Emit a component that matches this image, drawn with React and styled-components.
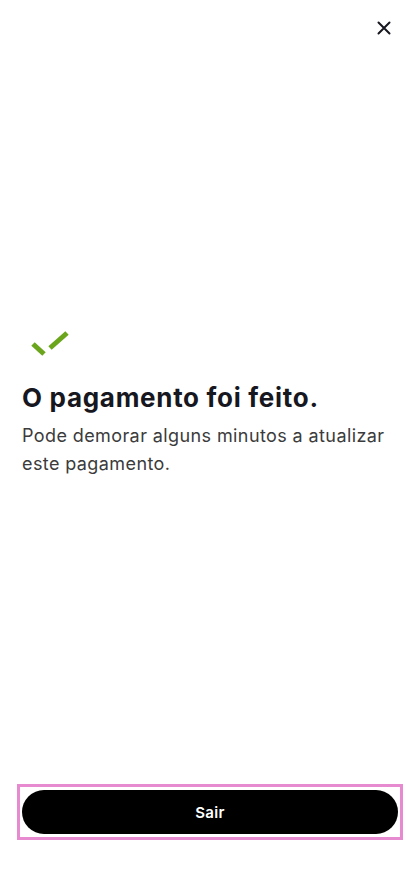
import React from 'react';
import styled, { createGlobalStyle } from 'styled-components';

const GlobalStyle = createGlobalStyle`
    html, body, #root {
        margin: 0;
        padding: 0;
        height: 100%;
    }
    body {
        background: #fff;
        font-family: Inter, "Noto Sans", sans-serif;
    }
`;

const Page = styled.div`
    display: flex;
    flex-direction: column;
    height: 884px;
    box-sizing: border-box;
`;

const Header = styled.div`
    display: flex;
    justify-content: flex-end;
    padding: 17px 25px 0 0;
`;

const CloseButton = styled.button`
    display: flex;
    align-items: center;
    justify-content: center;
    width: 22px;
    height: 22px;
    padding: 0;
    border: none;
    background: none;
    cursor: pointer;
`;

const Main = styled.div`
    flex: 1;
    display: flex;
    flex-direction: column;
    justify-content: center;
    padding: 0 22px;
    margin-top: -16px;
`;

const CheckMark = styled.div`
    width: 50px;
    height: 32px;
    margin: 0 0 20px 8px;
`;

const Title = styled.h1`
    margin: 0;
    font-size: 26px;
    line-height: 32px;
    font-weight: 700;
    color: #17171f;
    letter-spacing: 0.7px;
`;

const Body = styled.p`
    margin: 8px 0 0;
    font-size: 18px;
    line-height: 28px;
    color: #3b3b3b;
    letter-spacing: 0.4px;
`;

const Footer = styled.div`
    padding: 0 17px 44px;
`;

const Highlight = styled.div`
    border: 3px solid #e88ad0;
    padding: 3px 2px;
`;

const ExitButton = styled.button`
    display: block;
    width: 100%;
    height: 44px;
    border: none;
    border-radius: 22px;
    background: #000;
    color: #fff;
    font-family: Inter, "Noto Sans", sans-serif;
    font-size: 15px;
    font-weight: 600;
    letter-spacing: 0.3px;
    cursor: pointer;
`;

export default function App() {
    return (
        <>
            <GlobalStyle />
            <Page>
                <Header>
                    <CloseButton aria-label="Fechar">
                        <svg width="14" height="14" viewBox="0 0 14 14">
                            <path d="M1.5 1.5L12.5 12.5M12.5 1.5L1.5 12.5" stroke="#17171f" strokeWidth="2" strokeLinecap="round" />
                        </svg>
                    </CloseButton>
                </Header>
                <Main>
                    <CheckMark>
                        <svg width="50" height="32" viewBox="0 0 50 32">
                            <path d="M3 14L14 24" stroke="#6aa51c" strokeWidth="5" strokeLinecap="butt" />
                            <path d="M20 18L37 3" stroke="#6aa51c" strokeWidth="5" strokeLinecap="butt" />
                        </svg>
                    </CheckMark>
                    <Title>O pagamento foi feito.</Title>
                    <Body>Pode demorar alguns minutos a atualizar este pagamento.</Body>
                </Main>
                <Footer>
                    <Highlight>
                        <ExitButton>Sair</ExitButton>
                    </Highlight>
                </Footer>
            </Page>
        </>
    );
}
